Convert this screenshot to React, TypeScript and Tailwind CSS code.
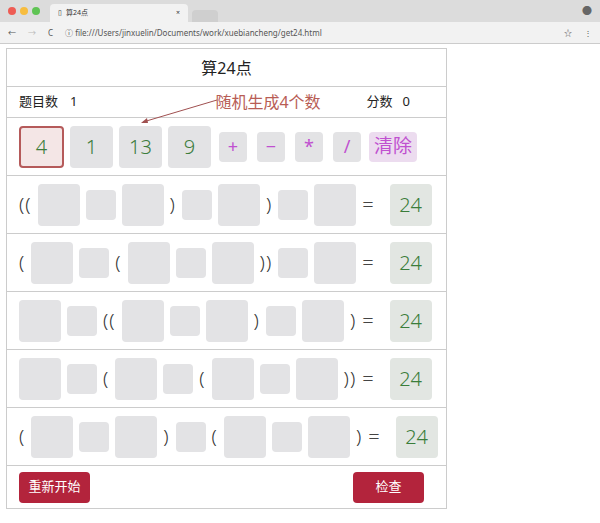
const B = () => <div className="w-[42px] h-[42px] rounded bg-[#e3e3e5] shrink-0" />;
const S = () => <div className="w-[30px] h-[30px] rounded-sm bg-[#e3e3e5] shrink-0" />;
const P = ({ t }: { t: string }) => <span className="text-[19px] font-light text-[#333] leading-none tracking-[1px] shrink-0">{t}</span>;
const R = () => (
  <>
    <span className="ml-auto text-[20px] font-light text-[#444] shrink-0">=</span>
    <div className="ml-[10px] w-[42px] h-[42px] shrink-0 rounded bg-[#e2e6e2] flex items-center justify-center text-[20px] font-light text-[#3a7d3a]">24</div>
  </>
);

const rows: string[][] = [
  ["((", "B", "S", "B", ")", "S", "B", ")", "S", "B"],
  ["(", "B", "S", "(", "B", "S", "B", "))", "S", "B"],
  ["B", "S", "((", "B", "S", "B", ")", "S", "B", ")"],
  ["B", "S", "(", "B", "S", "(", "B", "S", "B", "))"],
  ["(", "B", "S", "B", ")", "S", "(", "B", "S", "B", ")"],
];

export default function App() {
  return (
    <div className="w-[600px] h-[523px] bg-white overflow-hidden" style={{ fontFamily: '"Noto Sans", "Noto Sans CJK SC", sans-serif' }}>
      {/* chrome */}
      <div className="h-[22px] bg-[#dcdcdc] flex items-end pl-2 relative">
        <div className="absolute left-2 top-[7px] flex gap-[4px]">
          <span className="w-[8px] h-[8px] rounded-full bg-[#ee5c54]" />
          <span className="w-[8px] h-[8px] rounded-full bg-[#f7bd3f]" />
          <span className="w-[8px] h-[8px] rounded-full bg-[#5fc454]" />
        </div>
        <div className="ml-[42px] w-[138px] h-[18px] bg-[#f2f2f2] rounded-t flex items-center px-2 text-[7px] text-[#333]">
          <span className="mr-1">▯</span>算24点<span className="ml-auto">×</span>
        </div>
        <div className="ml-1 w-[26px] h-[12px] bg-[#cfcfcf] rounded-t" />
        <span className="absolute right-2 top-[4px] text-[10px] text-[#666]">●</span>
      </div>
      <div className="h-[22px] bg-[#f2f2f2] border-b border-[#ccc] flex items-center px-2 text-[8px] text-[#555] gap-3">
        <span>←</span><span className="text-[#bbb]">→</span><span>C</span>
        <span>ⓘ file:///Users/jinxuelin/Documents/work/xuebiancheng/get24.html</span>
        <span className="ml-auto">☆</span><span>⋮</span>
      </div>
      {/* app */}
      <div className="ml-[6px] mt-[4px] w-[441px] border border-[#ccc] text-[#222]">
        <div className="h-[38px] flex items-center justify-center text-[16px] border-b border-[#ccc]">算24点</div>
        <div className="h-[31px] flex items-center px-3 text-[13px] border-b border-[#ccc] relative">
          <span>题目数</span><span className="ml-3">1</span>
          <span className="ml-[138px] text-[16px] text-[#b85d55]">随机生成4个数</span>
          <span className="ml-auto mr-[10px]">分数</span><span className="mr-[24px]">0</span>
          <svg className="absolute left-[128px] top-[11px]" width="84" height="28"><line x1="82" y1="2" x2="8" y2="24" stroke="#a05050" strokeWidth="1" /><path d="M6 25 L12 20 L13 25 Z" fill="#a05050" /></svg>
        </div>
        <div className="h-[58px] flex items-center px-3 gap-[6px] border-b border-[#ccc]">
          <div className="w-[45px] h-[42px] rounded bg-[#f4e6e6] border-2 border-[#b55a5a] flex items-center justify-center text-[20px] font-light text-[#3c7c3c]">4</div>
          <div className="w-[43px] h-[42px] rounded bg-[#e3e3e5] flex items-center justify-center text-[20px] font-light text-[#3c7c3c]">1</div>
          <div className="w-[43px] h-[42px] rounded bg-[#e3e3e5] flex items-center justify-center text-[20px] font-light text-[#3c7c3c]">13</div>
          <div className="w-[43px] h-[42px] rounded bg-[#e3e3e5] flex items-center justify-center text-[20px] font-light text-[#3c7c3c]">9</div>
          {["+", "−", "*", "/"].map((o) => (
            <div key={o} className="w-[28px] h-[30px] rounded-sm bg-[#e3e3e5] flex items-center justify-center text-[18px] text-[#c050d0] mx-[2px]">{o}</div>
          ))}
          <div className="w-[48px] h-[30px] rounded-sm bg-[#ecdcef] flex items-center justify-center text-[19px] text-[#c050d0]">清除</div>
        </div>
        {rows.map((r, i) => (
          <div key={i} className="h-[58px] flex items-center pl-3 pr-[18px] gap-[6px] border-b border-[#ccc]">
            {r.map((c, j) => (c === "B" ? <B key={j} /> : c === "S" ? <S key={j} /> : <P key={j} t={c} />))}
            <R />
          </div>
        ))}
        <div className="h-[42px] flex items-center justify-between px-3">
          <button className="w-[71px] h-[31px] rounded bg-[#b3243c] text-white text-[13px]">重新开始</button>
          <button className="w-[71px] h-[31px] rounded bg-[#b3243c] text-white text-[13px] mr-[10px]">检查</button>
        </div>
      </div>
    </div>
  );
}
